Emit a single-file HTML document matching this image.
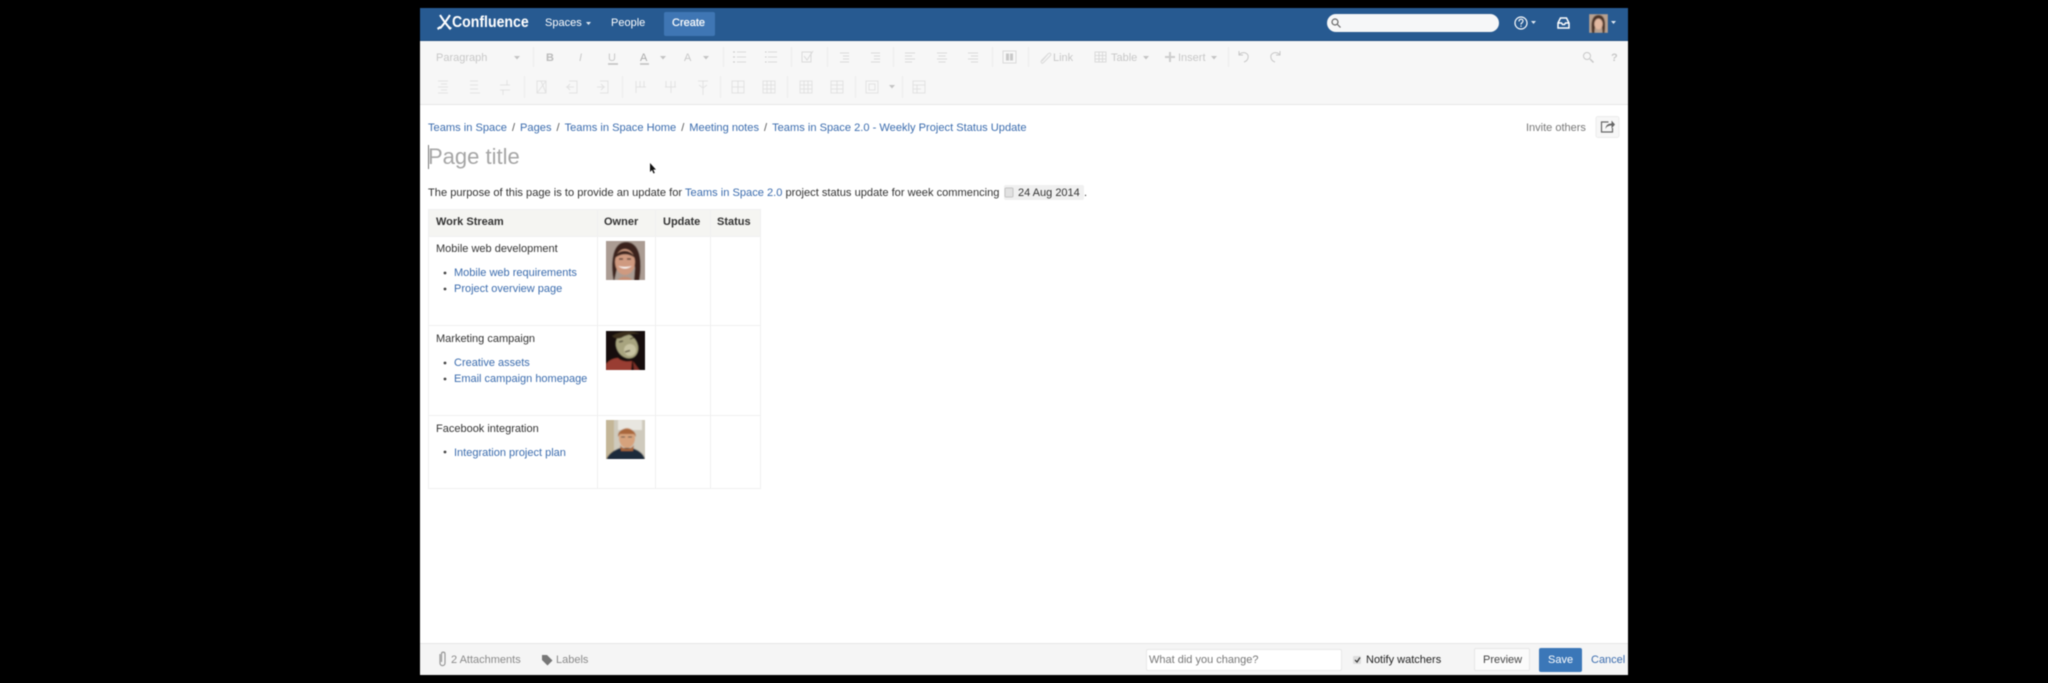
<!DOCTYPE html>
<html><head><meta charset="utf-8"><title>Confluence editor</title>
<style>
html,body{margin:0;padding:0;background:#000;width:2048px;height:683px;overflow:hidden}
#w{position:relative;width:2048px;height:683px;overflow:hidden;font:11px/16px "Liberation Sans",Arial,sans-serif;filter:blur(.45px)}
.b{position:absolute}
.t{position:absolute;white-space:nowrap;line-height:16px;color:#333}
.l{color:#3b6cae}
.g{color:#c8c8c8}
.h{color:#fff}
.s{color:#8a8a8a}
.th{font-weight:bold;color:#333}
.d{color:#555;margin:0 5px}
svg{position:absolute;left:0;top:0}
</style></head><body><div id="w">
<div class="b" style="left:420px;top:8px;width:1208px;height:667px;background:#fff"></div>
<div class="b" style="left:420px;top:8px;width:1208px;height:32px;background:#275a91;border-bottom:1px solid #1f4d80"></div>
<div class="b" style="left:420px;top:41px;width:1208px;height:63px;background:#f7f7f7;border-bottom:1px solid #e6e6e6"></div>
<div class="b" style="left:664px;top:12px;width:51px;height:24px;background:#3f76b4;border-radius:2px"></div>
<div class="b" style="left:1327px;top:14px;width:172px;height:18px;background:#f6f7f8;border-radius:9px"></div>

<div class="t h" style="left:452px;top:14px;font-size:16px;font-weight:bold;transform:scaleX(.88);transform-origin:0 50%;line-height:18px">Confluence</div>
<div class="t h" style="left:545px;top:15px">Spaces</div>
<div class="t h" style="left:611px;top:15px">People</div>
<div class="t h" style="left:672px;top:15px;font-size:11px;text-shadow:0 0 .6px #fff">Create</div>

<div class="t g" style="left:436px;top:50px">Paragraph</div>
<div class="t" style="left:546px;top:50px;font-weight:bold;color:#bbb">B</div>
<div class="t g" style="left:579px;top:50px;font-style:italic">I</div>
<div class="t g" style="left:608px;top:50px">U</div>
<div class="t" style="left:640px;top:50px;color:#aaa">A</div>
<div class="t g" style="left:684px;top:50px;font-size:11px">A</div>
<div class="t g" style="left:1053px;top:50px">Link</div>
<div class="t g" style="left:1111px;top:50px">Table</div>
<div class="t g" style="left:1178px;top:50px">Insert</div>
<div class="t g" style="left:1611px;top:50px;font-weight:bold">?</div>

<div class="t" style="left:428px;top:120px;font-size:11.1px"><span class="l">Teams in Space</span><span class="d">/</span><span class="l">Pages</span><span class="d">/</span><span class="l">Teams in Space Home</span><span class="d">/</span><span class="l">Meeting notes</span><span class="d">/</span><span class="l">Teams in Space 2.0 - Weekly Project Status Update</span></div>
<div class="t" style="left:1526px;top:120px;color:#777">Invite others</div>
<div class="t" style="left:428px;top:144px;font-size:22px;line-height:26px;color:#a6a6a6">Page title</div>
<div class="b" style="left:428px;top:145px;width:1px;height:24px;background:#777"></div>

<div class="t" style="left:428px;top:185px;font-size:11.1px">The purpose of this page is to provide an update for <span class="l">Teams in Space 2.0</span> project status update for week commencing</div>
<div class="b" style="left:1004px;top:185px;width:80px;height:15px;background:#f0f0f0;border-radius:2px"></div>
<div class="t" style="left:1018px;top:185px">24 Aug 2014</div>
<div class="t" style="left:1084px;top:185px">.</div>

<div class="b" style="left:428px;top:209px;width:333px;height:27px;background:#f5f5f2"></div>
<div class="t th" style="left:436px;top:214px">Work Stream</div>
<div class="t th" style="left:604px;top:214px">Owner</div>
<div class="t th" style="left:663px;top:214px">Update</div>
<div class="t th" style="left:717px;top:214px">Status</div>

<div class="t" style="left:436px;top:241px">Mobile web development</div>
<div class="t l" style="left:454px;top:265px">Mobile web requirements</div>
<div class="t l" style="left:454px;top:281px">Project overview page</div>
<div class="t" style="left:436px;top:331px">Marketing campaign</div>
<div class="t l" style="left:454px;top:355px">Creative assets</div>
<div class="t l" style="left:454px;top:371px">Email campaign homepage</div>
<div class="t" style="left:436px;top:421px">Facebook integration</div>
<div class="t l" style="left:454px;top:445px">Integration project plan</div>

<div class="b" style="left:420px;top:643px;width:1208px;height:32px;background:#f5f5f5;border-top:1px solid #e6e6e6;box-sizing:border-box"></div>
<div class="t s" style="left:451px;top:652px">2 Attachments</div>
<div class="t s" style="left:556px;top:652px">Labels</div>
<div class="b" style="left:1146px;top:649px;width:196px;height:22px;background:#fff;border:1px solid #e8e8e8;box-sizing:border-box;border-radius:2px"></div>
<div class="t" style="left:1149px;top:652px;color:#777">What did you change?</div>
<div class="b" style="left:1353px;top:656px;width:8px;height:8px;background:#ddd;border-radius:1px"></div>
<div class="t" style="left:1366px;top:652px;color:#222">Notify watchers</div>
<div class="b" style="left:1474px;top:648px;width:56px;height:23px;background:#fbfbfb;border:1px solid #e6e6e6;box-sizing:border-box;border-radius:2px"></div>
<div class="t" style="left:1483px;top:652px;color:#444">Preview</div>
<div class="b" style="left:1539px;top:648px;width:43px;height:24px;background:#3b77b8;border-radius:2px"></div>
<div class="t h" style="left:1548px;top:652px;font-size:11px">Save</div>
<div class="t l" style="left:1591px;top:652px">Cancel</div>

<svg width="2048" height="683" viewBox="0 0 2048 683" fill="none">
<defs><filter id="f" x="-5%" y="-5%" width="110%" height="110%"><feGaussianBlur stdDeviation=".5"/></filter>
<clipPath id="c1"><rect x="606" y="241" width="39" height="39"/></clipPath>
<clipPath id="c2"><rect x="606" y="331" width="39" height="39"/></clipPath>
<clipPath id="c3"><rect x="606" y="420" width="39" height="39"/></clipPath>
<clipPath id="c0"><rect x="1589" y="14" width="19" height="19"/></clipPath></defs>
<!-- logo -->
<g stroke="#fff" stroke-width="2"><path d="M440 15c3 5 6 9 10 13.500M450 15c-3 5-6 9-10 13.500"/></g>
<g fill="#fff"><path d="M437 28l3-2 1 2-3 2zM449 26l3 2-2 2-2-2z"/></g>
<!-- nav carets -->
<g fill="#dfe8f2"><path d="M586 22h5l-2.500 3zM1531 21h5l-2.500 3zM1611 21h5l-2.500 3z"/></g>
<!-- search -->
<g stroke="#666" stroke-width="1.200"><circle cx="1335" cy="22" r="3"/><path d="M1337.500 24.500l3 3"/></g>
<!-- help -->
<g stroke="#fff" stroke-width="1.200"><circle cx="1521" cy="23" r="6"/></g>
<path d="M1519 21.500c0-3 4-3 4-.5 0 2-2 1.500-2 3.500M1521 25.500v1.200" stroke="#fff" stroke-width="1.100"/>
<!-- inbox -->
<path d="M1558 23l2.500-5h6l2.500 5v5h-11zM1558 23h3.500l1 1.500h2l1-1.500h3.500" stroke="#fff" stroke-width="1.500"/>
<!-- header avatar -->
<g clip-path="url(#c0)" filter="url(#f)">
<rect x="1589" y="14" width="19" height="19" fill="#b9a18f"/>
<path d="M1592 33c-1-8-1-18 6.500-18s7 10 6 18h-2c0-5-1-7-1-9h-6c0 2-1 4-1 9z" fill="#4a3026"/>
<ellipse cx="1598.500" cy="24" rx="4.200" ry="5.500" fill="#e2b8a0"/>
</g>

<!-- toolbar separators -->
<g stroke="#ececec"><path d="M533.500 47v20M723.500 47v20M791.500 47v20M827.500 47v20M893.500 47v20M992.500 47v20M1028.500 47v20M1228.500 47v20M524.500 76v22M622.500 76v22M720.500 76v22M787.500 76v22M855.500 76v22M902.500 76v22"/></g>

<!-- toolbar carets -->
<g fill="#c4c4c4"><path d="M514 56h6l-3 3.500zM660 56h6l-3 3.500zM703 56h6l-3 3.500zM1143 56h6l-3 3.500zM1211 56h6l-3 3.500zM889 85h6l-3 3.500z"/></g>

<g stroke="#dadada" stroke-width="1">
<path d="M608 64h10M640 64h9" stroke="#c0c0c0" stroke-width="1.400"/>
<!-- lists -->
<path d="M737 52h9M737 57h9M737 62h9M768 52h9M768 57h9M768 62h9"/>
<path d="M733 52h2M733 57h2M733 62h2M765 52h1.500M765 57h1.500M765 62h1.500" stroke="#c8c8c8"/>
<!-- task -->
<path d="M802 52h9v10h-9zM804 56l3 4 6-9"/>
<!-- indents -->
<path d="M840 53h9M843 56h6M843 59h6M840 62h9M871 53h9M874 56h6M874 59h6M871 62h9"/>
<!-- aligns -->
<path d="M905 53h10M905 56h7M905 59h10M905 62h7M937 53h10M938.500 56h7M937 59h10M938.500 62h7M968 53h10M971 56h7M968 59h10M971 62h7"/>
<!-- layout -->
<path d="M1003 51h13v12h-13z"/><path d="M1006 53.500h3v7h-3zM1010 53.500h3v7h-3z" fill="#c8c8c8" stroke="none"/>
<!-- link -->
<path d="M1042 61l6-7c2-2 4 0 2 2l-7 7c-1 1-3-1-1-3l6-6"/>
<!-- table -->
<path d="M1095 52h11v10h-11zM1095 55.500h11M1095 59h11M1099 52v10M1102.500 52v10"/>
<!-- insert -->
<path d="M1165 57h10M1170 52v10" stroke-width="2" stroke="#cdcdcd"/>
<!-- undo redo -->
<path d="M1239 54.500c5-4 10-1 9 3.500-.5 2.500-2.500 3.500-4 4M1239 51v4h4M1280 54.500c-5-4-10-1-9 3.500.5 2.500 2.500 3.500 4 4M1280 51v4h-4" stroke="#c8c8c8"/>
<!-- find -->
<circle cx="1587" cy="56" r="3.500" stroke="#c8c8c8"/><path d="M1590 59l3.500 3.500" stroke="#c8c8c8" stroke-width="1.500"/>
</g>
<!-- row 2 -->
<g stroke="#e2e2e2" stroke-width="1">
<path d="M438 81h10M441 84h6M438 87h10M441 90h6M438 93h10M470 81h8M470 85h8M470 89h8M470 93h10M500 85h10M500 90h10M507 80v5M503 90v5"/>
<path d="M537 81h9v12h-9zM541 81l5 12M546 81l-9 12M566 87h8M570 84l-3 3 3 3M569 81h8v12h-8M597 87h8M601 84l3 3-3 3M600 81h8v12h-8"/>
<path d="M636 81v12M640 81v6M644 81v6M636 87h10M666 81v6M671 81v12M675 81v6M665 87h11M698 81h10M703 81v14M699 85l4 3 4-3"/>
<path d="M732 81h12v12h-12zM732 87h12M738 81v12M763 81h12v12h-12zM763 85h12M763 89h12M767 81v12M771 81v12M800 81h12v12h-12zM800 85h12M800 89h12M804 81v12M808 81v12M831 81h12v12h-12zM831 85h12M831 89h12M837 81v12"/>
<path d="M866 81h12v12h-12zM869 84h6v6h-6zM913 81h12v12h-12zM913 85h12M913 89h8M917 85v8"/>
</g>

<!-- share -->
<rect x="1596" y="116.500" width="23" height="21" rx="2" fill="#f7f7f7" stroke="#ececec"/>
<path d="M1608.500 122h-7v10h11v-4" stroke="#666" stroke-width="1.200"/><path d="M1605.500 129c0-4 3-5.500 6-5.500v-3l3.500 4-3.500 4v-3c-3 0-5 1-6 3.500z" fill="#666"/>

<!-- cursor -->
<path d="M650 163v9l2-2 1.500 3.500 1.300-.6-1.500-3.300h2.700z" fill="#111"/>

<!-- date icon -->
<rect x="1005" y="188" width="8" height="9" rx="1" fill="#e2e2e2" stroke="#c4c4c4"/>

<!-- table lines -->
<g stroke="#f0f0f0"><path d="M428.500 209v280M597.500 209v280M655.500 209v280M710.500 209v280M760.500 209v280M428 209.500h333M428 236.500h333M428 325.500h333M428 415.500h333M428 488.500h333"/></g>
<g fill="#444"><circle cx="445" cy="273" r="1.400"/><circle cx="445" cy="289" r="1.400"/><circle cx="445" cy="363" r="1.400"/><circle cx="445" cy="379" r="1.400"/><circle cx="445" cy="452" r="1.400"/></g>

<!-- avatar 1 -->
<g clip-path="url(#c1)"><g filter="url(#f)">
<rect x="604" y="239" width="43" height="43" fill="#ab9c93"/>
<path d="M614 282c-3-12-4-40 12-40s16 24 13 40h-5l1-14-2-12h-15l-1 12z" fill="#3a241b"/>
<ellipse cx="625" cy="262" rx="10" ry="13" fill="#cf9a80"/>
<path d="M615 258c2-9 16-10 20 0-6-5-14-5-20 0z" fill="#3a241b"/>
<path d="M619 259h4M627 259h4" stroke="#3a241b" stroke-width="1.300"/>
<path d="M618 266q7 5 14 0q-7 2-14 0z" fill="#fff"/>
<path d="M617 282c2-7 14-7 16 0z" fill="#c48e75"/>
</g></g>

<!-- avatar 2 -->
<g clip-path="url(#c2)"><g filter="url(#f)">
<rect x="604" y="329" width="43" height="43" fill="#141009"/>
<ellipse cx="627" cy="346" rx="10.500" ry="13" fill="#a8a47f" transform="rotate(-30 627 346)"/>
<ellipse cx="630" cy="350" rx="6" ry="6" fill="#c7c3a2"/>
<path d="M612 336c8-5 20-6 28-2-7-1-14 1-19 4-3 1-6 1-9-2z" fill="#3a2f1f"/>
<path d="M619 342l4-1M630 339l4-1.500M625 352l5-1.500" stroke="#443c2a" stroke-width="1.200"/>
<path d="M606 372v-8c3-4 8-6 12-6 3 3 8 4 14 3l-1 11z" fill="#993c30"/>
<path d="M633 361l8 11h-7z" fill="#7c2e25"/>
</g></g>

<!-- avatar 3 -->
<g clip-path="url(#c3)"><g filter="url(#f)">
<rect x="604" y="418" width="43" height="43" fill="#cfcabd"/>
<rect x="604" y="418" width="10" height="43" fill="#c4b697"/>
<rect x="618" y="420" width="24" height="10" fill="#e8e6e0"/>
<path d="M606 461c2-8 9-11 14-13h12c6 2 11 5 13 11v2z" fill="#1e2b3b"/>
<ellipse cx="627" cy="438" rx="8" ry="10" fill="#d6a27c"/>
<path d="M618 437c-1-11 18-11 18 0l-2-3h-14z" fill="#a8663a"/>
<path d="M620 445c3 5 11 5 14 0l-1 6h-12z" fill="#a8663a"/>
<path d="M621 437h4M628 437h4" stroke="#444"/>
</g></g>

<!-- clip + tag + check -->
<path d="M440 654v9c0 3.500 5 3.500 5 0v-9c0-2.500-3.500-2.500-3.500 0v8" stroke="#999" stroke-width="1.200"/>
<path d="M542 655h5l5.500 5.500-5 5-5.500-5.500z" fill="#777"/>
<path d="M1355 660l2 2 3-4.500" stroke="#333" stroke-width="1.200"/>
</svg>
</div></body></html>
